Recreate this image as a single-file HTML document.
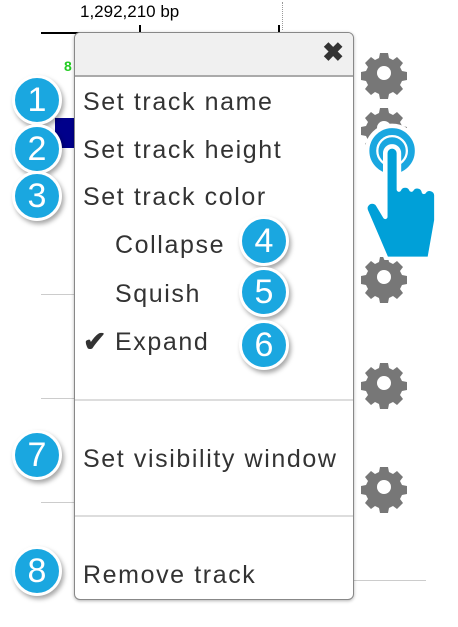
<!DOCTYPE html>
<html><head><style>
body{margin:0;width:458px;height:627px;background:#fff;position:relative;overflow:hidden;font-family:"Liberation Sans",sans-serif}
.a{position:absolute}
.menu{left:74px;top:32px;width:278px;height:566px;border:1px solid #888;border-radius:6px;background:#fff;box-shadow:0 1px 3px rgba(0,0,0,.3);overflow:hidden}
.hd{left:0;top:0;width:278px;height:42px;background:#f0f0f0;border-bottom:2px solid #aaa}
.it{font-size:25px;color:#333;letter-spacing:1.6px;white-space:nowrap}
.b{width:44px;height:44px;border-radius:50%;background:#1aa7e0;border:3px solid #fff;box-shadow:2px 3px 5px rgba(0,0,0,.35);color:#fff;font-size:34px;text-align:center;line-height:44px}
.sep{height:2px;background:#ddd;width:278px;left:0}
.gl{height:1px;background:#ccc}
</style></head><body>
<div class="a" style="left:80px;top:2px;font-size:17px;color:#000">1,292,210 bp</div>
<div class="a" style="left:41px;top:32px;width:240px;height:2px;background:#000"></div>
<div class="a" style="left:139px;top:25px;width:2px;height:8px;background:#000"></div>
<div class="a" style="left:278px;top:25px;width:2px;height:8px;background:#000"></div>
<div class="a" style="left:282px;top:2px;height:28px;border-left:1px dotted #999"></div>
<div class="a" style="left:64px;top:58px;font-size:14px;color:#2c2;font-weight:bold">8</div>
<div class="a" style="left:55px;top:118px;width:20px;height:30px;background:#00008b"></div>
<div class="a gl" style="left:41px;top:294px;width:40px"></div>
<div class="a gl" style="left:41px;top:398px;width:40px"></div>
<div class="a gl" style="left:41px;top:502px;width:40px"></div>
<div class="a gl" style="left:350px;top:580px;width:76px"></div>
<svg class="a" style="left:0;top:0" width="458" height="627">
<defs><g id="g"><path fill="#777" d="M-4,-20h8l1,5 4,2 4,-3 6,6 -3,4 2,4 5,1v8l-5,1 -2,4 3,4 -6,6 -4,-3 -4,2 -1,5h-8l-1,-5 -4,-2 -4,3 -6,-6 3,-4 -2,-4 -5,-1v-8l5,-1 2,-4 -3,-4 6,-6 4,3 4,-2z"/><circle r="7" fill="#fff"/></g></defs>
<use href="#g" x="384" y="73"/><use href="#g" x="384" y="128"/><use href="#g" x="384" y="277"/><use href="#g" x="384" y="383"/><use href="#g" x="384" y="487"/>
</svg>
<div class="a menu">
<div class="a hd"></div>
<div class="a" style="right:9px;top:4px;font-size:26px;font-weight:bold;color:#333">✖</div>
<div class="a it" style="left:8px;top:55px">Set track name</div>
<div class="a it" style="left:8px;top:103px">Set track height</div>
<div class="a it" style="left:8px;top:150px">Set track color</div>
<div class="a it" style="left:40px;top:198px">Collapse</div>
<div class="a it" style="left:40px;top:247px">Squish</div>
<div class="a" style="left:8px;top:292px;font-size:28px;color:#333;font-weight:bold">✔</div>
<div class="a it" style="left:40px;top:295px">Expand</div>
<div class="a sep" style="top:366px"></div>
<div class="a it" style="left:8px;top:412px">Set visibility window</div>
<div class="a sep" style="top:482px"></div>
<div class="a it" style="left:8px;top:528px">Remove track</div>
</div>
<svg class="a" style="left:358px;top:110px" width="100" height="150" viewBox="0 0 88 132">
<circle cx="30" cy="36" r="22" fill="#1aa7e0" stroke="#fff" stroke-width="4"/>
<circle cx="30" cy="36" r="13" fill="none" stroke="#fff" stroke-width="2"/>
<path d="M24,38 a6,6 0 0 1 12,0 v32 a6,6 0 0 1 11,0 a6,6 0 0 1 11,2 a6,6 0 0 1 11,3 v22 l-6,34 h-38 l-18,-42 a6,6 0 0 1 11,-5 l6,10z" fill="#00a0d8" stroke="#fff" stroke-width="4" stroke-linejoin="round"/>
</svg>
<div class="a b" style="left:12px;top:75px">1</div>
<div class="a b" style="left:12px;top:124px">2</div>
<div class="a b" style="left:12px;top:171px">3</div>
<div class="a b" style="left:239px;top:216px">4</div>
<div class="a b" style="left:239px;top:267px">5</div>
<div class="a b" style="left:239px;top:320px">6</div>
<div class="a b" style="left:12px;top:430px">7</div>
<div class="a b" style="left:12px;top:546px">8</div>
</body></html>
